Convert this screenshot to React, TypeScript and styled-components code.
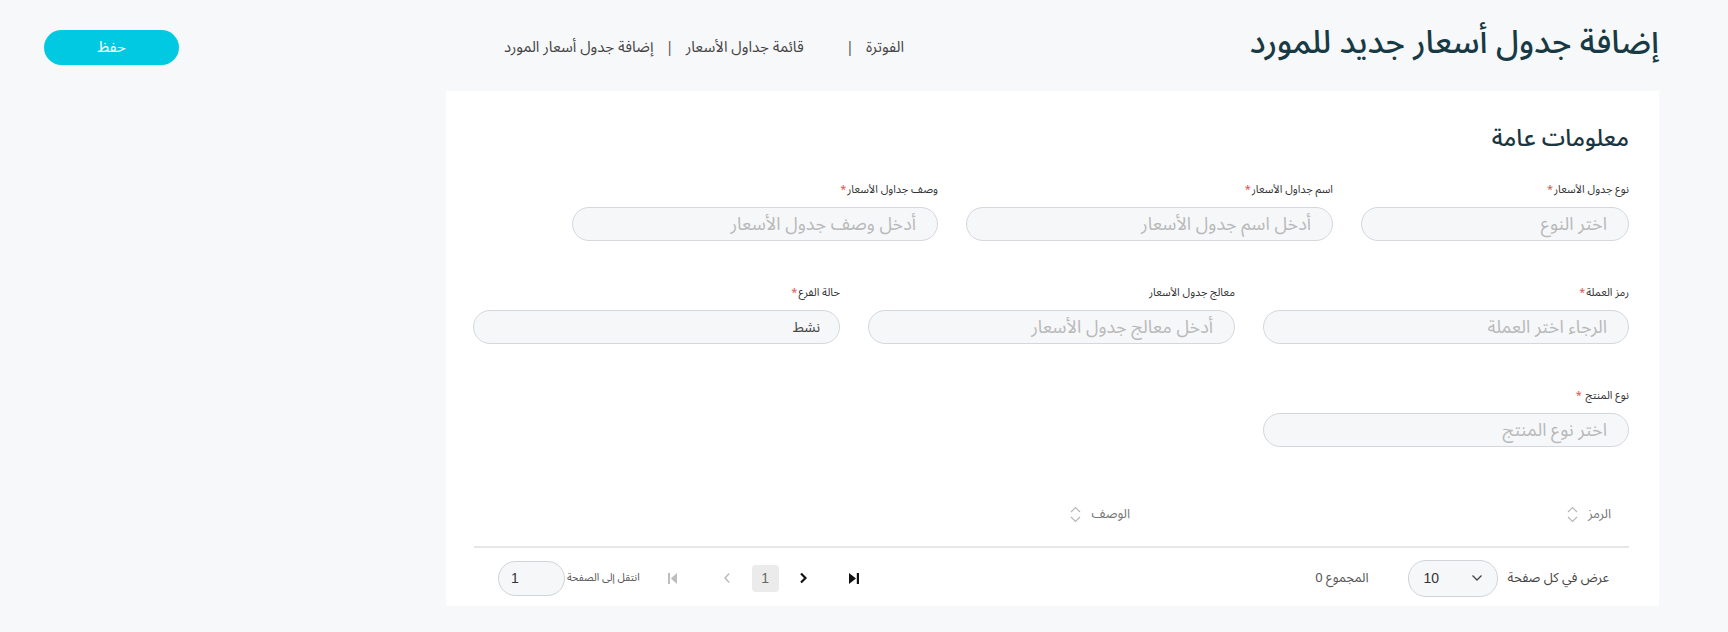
import React from "react";
import styled, { createGlobalStyle } from "styled-components";

const ARABIC = `"Noto Sans Arabic", "Noto Kufi Arabic", "DejaVu Sans", "Noto Sans", sans-serif`;

const Global = createGlobalStyle`
  html, body { margin: 0; padding: 0; }
  body {
    background: #f7f8fa;
    font-family: ${ARABIC};
    color: #333;
  }
  * { box-sizing: border-box; }
`;

const Page = styled.div`
  direction: rtl;
  min-height: 632px;
  padding: 26px 69px 0 44px;
  display: flex;
  flex-direction: column;
`;

const Header = styled.header`
  display: flex;
  align-items: center;
  height: 42px;
`;

const TitleArea = styled.div`
  flex: 0 0 755px;
`;

const Title = styled.h1`
  margin: 0 0 9px;
  font-size: 32.5px;
  font-weight: 500;
  color: #183a44;
  line-height: 38px;
  white-space: nowrap;
`;

const Breadcrumb = styled.nav`
  display: flex;
  align-items: center;
  font-size: 15px;
  color: #444;
  white-space: nowrap;
`;

const Crumb = styled.span``;

const Sep = styled.span<{ $r: number; $l: number }>`
  margin-right: ${(p) => p.$r}px;
  margin-left: ${(p) => p.$l}px;
  color: #555;
`;

const SaveButton = styled.button`
  margin-right: auto;
  width: 135px;
  height: 35px;
  border: none;
  border-radius: 18px;
  background: #00c9e1;
  color: #fff;
  font-family: ${ARABIC};
  font-size: 15px;
  cursor: pointer;
`;

const Card = styled.section`
  margin-top: 23px;
  width: 1213px;
  background: #fff;
  padding: 33px 30px 6px 28px;
`;

const SectionTitle = styled.h2`
  margin: 0 0 28px;
  font-size: 23.5px;
  font-weight: 500;
  line-height: 30px;
  color: #1b3640;
`;

const Row = styled.div`
  display: flex;
  gap: 28px;
  margin-bottom: 44px;
`;

const Field = styled.div<{ $w: number }>`
  width: ${(p) => p.$w}px;
  display: flex;
  flex-direction: column;
`;

const Label = styled.label`
  font-size: 11px;
  line-height: 16px;
  color: #333;
  margin-bottom: 9px;
`;

const Star = styled.span`
  color: #d9534f;
  margin-right: 1px;
`;

const Input = styled.input`
  height: 34px;
  border: 1px solid #d4d7dc;
  border-radius: 17px;
  background: #f6f7f9;
  padding: 0 21px;
  font-family: ${ARABIC};
  font-size: 18px;
  color: #555;
  outline: none;
  &::placeholder { color: #b9b9b9; }
`;

const ValueInput = styled(Input)`
  font-size: 14px;
  padding: 0 19px;
  color: #444;
`;

const TableHead = styled.div`
  display: flex;
  margin-top: 1px;
  border-bottom: 2px solid #e6e7eb;
  height: 57px;
  align-items: flex-start;
  padding-top: 9px;
`;

const HeadCell = styled.div<{ $w?: number }>`
  ${(p) => (p.$w ? `flex: 0 0 ${p.$w}px;` : "flex: 1;")}
  display: flex;
  align-items: center;
  gap: 10px;
  padding-right: 18px;
  font-size: 13px;
  color: #777;
`;

const SortIcon = () => (
  <svg width="11" height="17" viewBox="0 0 11 17" fill="none" stroke="#b5b5b5" strokeWidth="1.1">
    <path d="M1 6 L5.5 1.5 L10 6" />
    <path d="M1 11 L5.5 15.5 L10 11" />
  </svg>
);

const Footer = styled.div`
  display: flex;
  align-items: center;
  height: 44px;
  padding: 0 20px 0 24px;
  margin-top: 8px;
`;

const FooterText = styled.span`
  font-size: 13px;
  color: #444;
  white-space: nowrap;
`;

const SelectBox = styled.div`
  direction: ltr;
  width: 90px;
  height: 37px;
  margin-right: 10px;
  border: 1px solid #d0d3d8;
  border-radius: 18px;
  background: #f6f7f9;
  display: flex;
  align-items: center;
  justify-content: space-between;
  padding: 0 14px 0 15px;
  font-family: "Liberation Sans", sans-serif;
  font-size: 14px;
  color: #333;
`;

const Total = styled(FooterText)`
  margin-right: 39px;
  color: #555;
`;

const Pager = styled.div`
  margin-right: auto;
  display: flex;
  align-items: center;
`;

const PageBtn = styled.button<{ $active?: boolean; $mr: number; $w: number }>`
  margin-right: ${(p) => p.$mr}px;
  height: 27px;
  width: ${(p) => p.$w}px;
  padding: 0;
  border: none;
  border-radius: 4px;
  background: ${(p) => (p.$active ? "#ebebeb" : "transparent")};
  color: #666;
  font-family: "Liberation Sans", sans-serif;
  font-size: 14px;
  display: flex;
  align-items: center;
  justify-content: center;
`;

const GotoLabel = styled.span`
  margin-right: 28px;
  font-size: 10.5px;
  color: #555;
  white-space: nowrap;
`;

const GotoInput = styled.input`
  direction: ltr;
  margin-right: 2px;
  width: 67px;
  height: 35px;
  border: 1px solid #d0d3d8;
  border-radius: 18px;
  background: #f6f7f9;
  padding: 0 12px;
  font-family: "Liberation Sans", sans-serif;
  font-size: 14px;
  color: #333;
  outline: none;
`;

type F = { w: number; label: string; req: boolean; ph: string; value?: string };

const fields1: F[] = [
  { w: 268, label: "نوع جدول الأسعار", req: true, ph: "اختر النوع" },
  { w: 367, label: "اسم جداول الأسعار", req: true, ph: "أدخل اسم جدول الأسعار" },
  { w: 366, label: "وصف جداول الأسعار", req: true, ph: "أدخل وصف جدول الأسعار" },
];
const fields2: F[] = [
  { w: 366, label: "رمز العملة", req: true, ph: "الرجاء اختر العملة" },
  { w: 367, label: "معالج جدول الأسعار", req: false, ph: "أدخل معالج جدول الأسعار" },
  { w: 367, label: "حالة الفرع", req: true, ph: "", value: "نشط" },
];

const FieldView = ({ f }: { f: F }) => (
  <Field $w={f.w}>
    <Label>
      {f.label}
      {f.req && <Star>*</Star>}
    </Label>
    {f.value ? <ValueInput defaultValue={f.value} /> : <Input placeholder={f.ph} />}
  </Field>
);

export default function App() {
  return (
    <>
      <Global />
      <Page>
        <Header>
          <TitleArea>
            <Title>إضافة جدول أسعار جديد للمورد</Title>
          </TitleArea>
          <Breadcrumb>
            <Crumb>الفوترة</Crumb>
            <Sep $r={12} $l={42}>|</Sep>
            <Crumb>قائمة جداول الأسعار</Crumb>
            <Sep $r={12} $l={12}>|</Sep>
            <Crumb>إضافة جدول أسعار المورد</Crumb>
          </Breadcrumb>
          <SaveButton>حفظ</SaveButton>
        </Header>

        <Card>
          <SectionTitle>معلومات عامة</SectionTitle>
          <Row>
            {fields1.map((f) => (
              <FieldView key={f.label} f={f} />
            ))}
          </Row>
          <Row>
            {fields2.map((f) => (
              <FieldView key={f.label} f={f} />
            ))}
          </Row>
          <Row>
            <FieldView f={{ w: 366, label: "نوع المنتج ", req: true, ph: "اختر نوع المنتج" }} />
          </Row>

          <TableHead>
            <HeadCell $w={481}>
              الرمز <SortIcon />
            </HeadCell>
            <HeadCell>
              الوصف <SortIcon />
            </HeadCell>
          </TableHead>

          <Footer>
            <FooterText>عرض في كل صفحة</FooterText>
            <SelectBox>
              <span>10</span>
              <svg width="12" height="8" viewBox="0 0 12 8" fill="none" stroke="#444" strokeWidth="1.3">
                <path d="M1.5 1.5 L6 6 L10.5 1.5" />
              </svg>
            </SelectBox>
            <Total>المجموع 0</Total>

            <Pager>
              <PageBtn $mr={0} $w={10} aria-label="last">
                <svg width="10" height="11" viewBox="0 0 10 11">
                  <path d="M0 0 L7 5.5 L0 11 Z" fill="#111" />
                  <rect x="7.8" y="0" width="2.2" height="11" fill="#111" />
                </svg>
              </PageBtn>
              <PageBtn $mr={42} $w={7} aria-label="next">
                <svg width="7" height="12" viewBox="0 0 7 12" fill="none" stroke="#111" strokeWidth="2.2">
                  <path d="M1 1.5 L5.5 6 L1 10.5" />
                </svg>
              </PageBtn>
              <PageBtn $active $mr={21} $w={27}>1</PageBtn>
              <PageBtn $mr={22} $w={6} aria-label="prev">
                <svg width="6" height="12" viewBox="0 0 6 12" fill="none" stroke="#bdbdbd" strokeWidth="1.6">
                  <path d="M5.2 1.5 L1 6 L5.2 10.5" />
                </svg>
              </PageBtn>
              <PageBtn $mr={47} $w={9} aria-label="first">
                <svg width="9" height="11" viewBox="0 0 9 11">
                  <rect x="0" y="0" width="2" height="11" fill="#bdbdbd" />
                  <path d="M9 0 L2.8 5.5 L9 11 Z" fill="#bdbdbd" />
                </svg>
              </PageBtn>
              <GotoLabel>انتقل إلى الصفحة</GotoLabel>
              <GotoInput defaultValue="1" />
            </Pager>
          </Footer>
        </Card>
      </Page>
    </>
  );
}
